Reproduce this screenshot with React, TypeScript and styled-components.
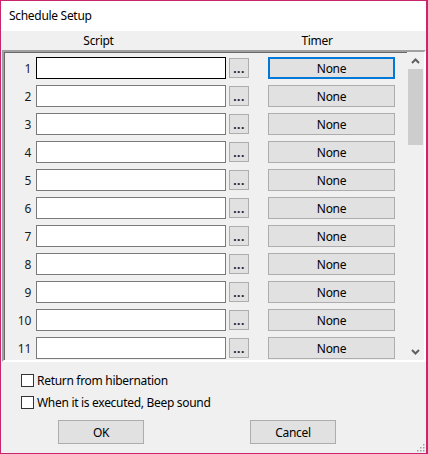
import React from 'react'
import styled, { createGlobalStyle } from 'styled-components'

const GlobalStyle = createGlobalStyle`
  html, body {
    margin: 0;
    padding: 0;
    background: #ffffff;
  }
  * {
    box-sizing: border-box;
  }
`

const Window = styled.div`
  position: relative;
  width: 428px;
  height: 454px;
  display: flex;
  flex-direction: column;
  background: #f0f0f0;
  border: 1px solid #c9246c;
  border-right-width: 2px;
  font-family: 'Noto Sans', 'Liberation Sans', sans-serif;
  font-size: 12px;
  letter-spacing: -0.3px;
  color: #000000;
  overflow: hidden;
`
const TitleBar = styled.div`
  height: 30px;
  flex: 0 0 30px;
  background: #ffffff;
  display: flex;
  align-items: center;
  padding-left: 8px;
  padding-bottom: 1px;
`
const HeaderRow = styled.div`
  height: 19px;
  flex: 0 0 19px;
  display: flex;
  align-items: flex-end;
  padding-bottom: 1px;
`
const HeaderCell = styled.div<{ $width: number; $offset?: number }>`
  width: ${(p) => p.$width}px;
  margin-left: ${(p) => p.$offset || 0}px;
  text-align: center;
  line-height: 16px;
`
const ListFrame = styled.div`
  margin-left: 1px;
  height: 312px;
  flex: 0 0 312px;
  display: flex;
  border-style: solid;
  border-width: 2px;
  border-color: #a0a0a0 #ffffff #ffffff #a0a0a0;
  box-shadow: inset 1px 1px 0 #696969;
`
const RowsArea = styled.div`
  flex: 1;
  overflow: hidden;
  padding-top: 2px;
  padding-left: 1px;
`
const Row = styled.div`
  height: 28px;
  display: flex;
  align-items: center;
`
const RowNumber = styled.div`
  width: 26px;
  margin-right: 5px;
  text-align: right;
  color: #1a1a1a;
`
const ScriptInput = styled.div<{ $focused?: boolean }>`
  width: 190px;
  height: 22px;
  background: #ffffff;
  border: 1px solid ${(p) => (p.$focused ? '#000000' : '#7a7a7a')};
`
const BrowseButton = styled.div`
  width: 20px;
  height: 20px;
  margin-left: 3px;
  background: #e1e1e1;
  border: 1px solid #adadad;
  display: flex;
  align-items: flex-end;
  justify-content: center;
  color: #0a1a3a;
  font-weight: bold;
  line-height: 14px;
  letter-spacing: 0.5px;
  padding-bottom: 1px;
`
const TimerButton = styled.div<{ $focused?: boolean }>`
  width: 127px;
  height: 22px;
  margin-left: 19px;
  background: #e1e1e1;
  border: ${(p) => (p.$focused ? '2px solid #0078d7' : '1px solid #adadad')};
  display: flex;
  align-items: center;
  justify-content: center;
`
const ScrollBar = styled.div`
  width: 17px;
  flex: 0 0 17px;
  display: flex;
  flex-direction: column;
  align-items: center;
  background: #f0f0f0;
`
const ArrowBox = styled.div`
  height: 17px;
  flex: 0 0 17px;
  width: 100%;
  display: flex;
  align-items: center;
  justify-content: center;
`
const Track = styled.div`
  flex: 1;
  width: 100%;
  padding: 0 1px;
`
const Thumb = styled.div`
  height: 76px;
  background: #cdcdcd;
`
const OptionsArea = styled.div`
  display: flex;
  flex-direction: column;
  padding-top: 7px;
  padding-left: 20px;
`
const CheckRow = styled.label`
  height: 22px;
  display: flex;
  align-items: center;
`
const CheckBox = styled.span`
  width: 13px;
  height: 13px;
  border: 1px solid #333333;
  background: #ffffff;
  margin-right: 3px;
`
const ButtonRow = styled.div`
  display: flex;
  gap: 106px;
  padding-top: 7px;
  padding-left: 57px;
`
const DialogButton = styled.div`
  width: 86px;
  height: 24px;
  background: #e1e1e1;
  border: 1px solid #adadad;
  display: flex;
  align-items: center;
  justify-content: center;
`
const SizeGrip = styled.svg`
  position: absolute;
  right: 0;
  bottom: 0;
`

const Chevron = ({ up }: { up?: boolean }) => (
  <svg width="9" height="6" viewBox="0 0 9 6">
    <path
      d={up ? 'M1 5 L4.5 1.5 L8 5' : 'M1 1 L4.5 4.5 L8 1'}
      fill="none"
      stroke="#606060"
      strokeWidth="2"
    />
  </svg>
)

const rows = Array.from({ length: 11 }, (_, i) => i + 1)

export default function App() {
  return (
    <>
      <GlobalStyle />
      <Window>
        <TitleBar>Schedule Setup</TitleBar>
        <HeaderRow>
          <HeaderCell $width={195}>Script</HeaderCell>
          <HeaderCell $width={132} $offset={55}>
            Timer
          </HeaderCell>
        </HeaderRow>
        <ListFrame>
          <RowsArea>
            {rows.map((n) => (
              <Row key={n}>
                <RowNumber>{n}</RowNumber>
                <ScriptInput $focused={n === 1} />
                <BrowseButton>...</BrowseButton>
                <TimerButton $focused={n === 1}>None</TimerButton>
              </Row>
            ))}
          </RowsArea>
          <ScrollBar>
            <ArrowBox>
              <Chevron up />
            </ArrowBox>
            <Track>
              <Thumb />
            </Track>
            <ArrowBox>
              <Chevron />
            </ArrowBox>
          </ScrollBar>
        </ListFrame>
        <OptionsArea>
          <CheckRow>
            <CheckBox />
            Return from hibernation
          </CheckRow>
          <CheckRow>
            <CheckBox />
            When it is executed, Beep sound
          </CheckRow>
        </OptionsArea>
        <ButtonRow>
          <DialogButton>OK</DialogButton>
          <DialogButton>Cancel</DialogButton>
        </ButtonRow>
        <SizeGrip width="10" height="10" viewBox="0 0 10 10">
          {[
            [8, 2],
            [8, 5],
            [5, 5],
            [8, 8],
            [5, 8],
            [2, 8],
          ].map(([x, y]) => (
            <rect key={`${x}-${y}`} x={x - 1} y={y - 1} width="1.5" height="1.5" fill="#a0a0a0" />
          ))}
        </SizeGrip>
      </Window>
    </>
  )
}
